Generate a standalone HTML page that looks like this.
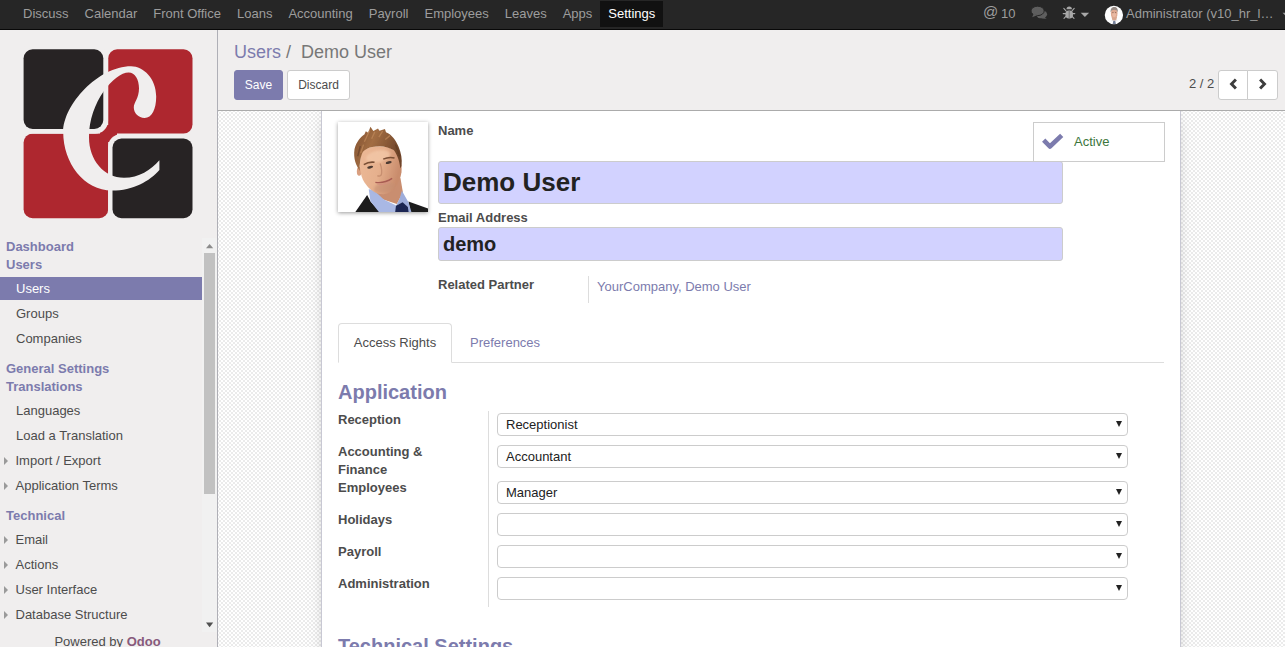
<!DOCTYPE html>
<html>
<head>
<meta charset="utf-8">
<title>Demo User - Odoo</title>
<style>
*{box-sizing:border-box;}
html,body{margin:0;padding:0;}
body{width:1285px;height:647px;overflow:hidden;position:relative;background:#f0eeee;
  font-family:"Liberation Sans",sans-serif;font-size:13px;line-height:18px;color:#4c4c4c;}
a{text-decoration:none;color:#7c7bad;}
/* ---------- navbar ---------- */
#nav{position:absolute;left:0;top:0;width:1285px;height:30px;background:#262626;border-bottom:1px solid #080808;}
#nav .m{position:absolute;top:0;height:29px;line-height:28px;color:#9d9d9d;font-size:13px;white-space:nowrap;}
#menu{position:absolute;left:15px;top:0;height:29px;display:flex;white-space:nowrap;}
#menu span{display:block;padding:0 8px;height:29px;line-height:28px;color:#9d9d9d;font-size:13px;}
#menu span.act{background:#111;color:#fff;margin-top:1px;height:26px;line-height:26px;}
/* ---------- sidebar ---------- */
#side{position:absolute;left:0;top:30px;width:218px;height:617px;background:#f0eeee;border-right:1px solid #afafb6;}
#side .sec{position:absolute;left:6px;font-weight:bold;color:#7c7bad;font-size:13px;line-height:18px;white-space:nowrap;}
#side .it{position:absolute;left:0;width:202px;height:22px;line-height:22px;padding-left:16px;color:#4c4c4c;font-size:13px;white-space:nowrap;}
#side .it.on{background:#7c7bad;color:#fff;height:23px;margin-top:-1px;line-height:24px;}
#side .tri{position:absolute;left:4px;width:0;height:0;border-left:4px solid #9a9a9a;border-top:4px solid transparent;border-bottom:4px solid transparent;}
/* ---------- control panel ---------- */
#cp{position:absolute;left:218px;top:30px;width:1067px;height:81px;background:#f0eeee;border-bottom:1px solid #ababab;}
.btn{position:absolute;height:30px;line-height:28px;font-size:12px;border-radius:3px;border:1px solid #ccc;background:#fff;color:#333;text-align:center;}
.btn.pri{background:#7c7bad;border-color:#7c7bad;color:#fff;}
/* ---------- content ---------- */
#bg{position:absolute;left:218px;top:111px;width:1067px;height:536px;
  background:repeating-conic-gradient(#ebebeb 0% 25%,#ffffff 0% 50%) 3px 1px / 4px 4px;}
#sheet{position:absolute;left:321px;top:100px;width:860px;height:700px;background:#fff;border:1px solid #c8c8d3;box-shadow:0 5px 20px -15px #000;}
.lbl{position:absolute;font-weight:bold;color:#4c4c4c;font-size:13px;line-height:18px;white-space:nowrap;}
.inp{position:absolute;background:#d2d2ff;border:1px solid #ccc;border-radius:3px;color:#222;font-weight:bold;white-space:nowrap;}
.sel{position:absolute;left:497px;width:631px;height:23px;background:#fff;border:1px solid #ccc;border-radius:4px;font-size:13px;line-height:21px;padding-left:8px;color:#222;}
.sel:after{content:"";position:absolute;right:5px;top:7px;width:0;height:0;border-top:6px solid #222;border-left:3.5px solid transparent;border-right:3.5px solid transparent;}
.h2{position:absolute;left:338px;font-size:20px;font-weight:bold;color:#7c7bad;line-height:24px;white-space:nowrap;}
</style>
</head>
<body>

<!-- content background & sheet -->
<div id="bg"></div>
<div id="sheet"></div>

<!-- form header -->
<div id="avatar" style="position:absolute;left:338px;top:122px;width:90px;height:90px;background:#fff;box-shadow:0 1px 4px rgba(0,0,0,0.4);overflow:hidden;">
<svg width="90" height="90" viewBox="14 14 621 621" style="display:block;">
  <defs>
    <filter id="bl" x="-10%" y="-10%" width="120%" height="120%"><feGaussianBlur stdDeviation="4"/></filter>
    <filter id="bl2" x="-20%" y="-20%" width="140%" height="140%"><feGaussianBlur stdDeviation="9"/></filter>
    <linearGradient id="skin" x1="0" y1="0" x2="1" y2="0.3"><stop offset="0" stop-color="#ecb997"/><stop offset="0.55" stop-color="#e6b08d"/><stop offset="1" stop-color="#c98c6c"/></linearGradient>
    <linearGradient id="hair" x1="0" y1="0" x2="1" y2="0.4"><stop offset="0" stop-color="#80502f"/><stop offset="0.45" stop-color="#a26d43"/><stop offset="1" stop-color="#6f4429"/></linearGradient>
  </defs>
  <g filter="url(#bl)">
    <!-- suit -->
    <path d="M130 640 L215 518 L240 565 L310 640Z" fill="#1c1b1d"/>
    <path d="M500 562 L640 612 L640 640 L515 640Z" fill="#1c1b1d"/>
    <!-- neck -->
    <path d="M245 440 L300 540 L420 580 L462 500 L445 400Z" fill="#c98e70"/>
    <!-- shirt -->
    <path d="M226 478 L238 560 L300 640 L425 640 L416 590 L330 548 L258 482Z" fill="#a9b8e4"/>
    <path d="M455 488 L502 572 L522 640 L482 640 L446 576 L416 590 L440 540Z" fill="#9eaddb"/>
    <!-- tie -->
    <path d="M414 592 L460 568 L496 600 L502 640 L408 640Z" fill="#1e2852"/>
    <!-- ear -->
    <ellipse cx="160" cy="355" rx="16" ry="30" fill="#d99f80"/>
    <!-- face -->
    <path d="M180 215 C160 280 160 350 185 410 C215 470 270 515 330 512 C395 505 440 440 452 360 C458 300 440 240 400 205 C330 170 240 175 180 215Z" fill="url(#skin)"/>
    <ellipse cx="290" cy="250" rx="85" ry="40" transform="rotate(-12 290 250)" fill="#f3c8a8" opacity="0.8" filter="url(#bl2)"/>
    <ellipse cx="335" cy="465" rx="75" ry="35" transform="rotate(-12 335 465)" fill="#c48f73" opacity="0.55" filter="url(#bl2)"/>
    <!-- hair -->
    <path d="M164 352 C140 312 118 270 128 200 C140 150 170 118 196 100 L206 78 L222 88 L238 46 L258 76 L290 58 L300 74 L338 62 L345 84 C385 100 415 140 432 185 C450 230 458 270 452 318 L444 334 C440 292 424 240 398 208 C350 178 300 176 250 186 C220 192 200 205 186 220 C170 250 162 300 164 352Z" fill="url(#hair)"/>
    <path d="M196 150 L232 72 M246 130 L268 82 M296 118 L322 76 M340 134 L372 108 M170 230 L190 170" stroke="#bd8759" stroke-width="9" fill="none" opacity="0.75"/>
    <path d="M150 250 L168 180 M410 170 L440 250" stroke="#5e3a24" stroke-width="10" fill="none" opacity="0.6"/>
    <!-- brows / eyes -->
    <path d="M192 308 Q228 286 266 292" stroke="#7a4f35" stroke-width="11" fill="none"/>
    <path d="M326 270 Q365 252 404 262" stroke="#7a4f35" stroke-width="11" fill="none"/>
    <ellipse cx="236" cy="326" rx="21" ry="9" transform="rotate(-12 236 326)" fill="#4d3b33"/>
    <ellipse cx="364" cy="294" rx="21" ry="9" transform="rotate(-12 364 294)" fill="#4d3b33"/>
    <!-- nose -->
    <path d="M305 300 Q322 350 312 380 Q300 392 286 384" stroke="#c78f70" stroke-width="9" fill="none"/>
    <!-- mouth -->
    <path d="M272 430 Q330 440 388 403" stroke="#a85b52" stroke-width="9" fill="none"/>
    <path d="M285 442 Q335 452 375 425" stroke="#d58f80" stroke-width="7" fill="none"/>
  </g>
</svg></div>

<div class="lbl" style="left:438px;top:122px;">Name</div>
<div class="inp" style="left:438px;top:161px;width:625px;height:43px;font-size:26px;line-height:41px;padding-left:4px;">Demo User</div>
<div class="lbl" style="left:438px;top:209px;">Email Address</div>
<div class="inp" style="left:438px;top:227px;width:625px;height:34px;font-size:20px;line-height:32px;padding-left:4px;">demo</div>
<div class="lbl" style="left:438px;top:276px;">Related Partner</div>
<div style="position:absolute;left:588px;top:276px;width:1px;height:27px;background:#ddd;"></div>
<div style="position:absolute;left:597px;top:278px;color:#7c7bad;white-space:nowrap;">YourCompany, Demo User</div>

<!-- Active stat button -->
<div style="position:absolute;left:1033px;top:122px;width:132px;height:40px;border:1px solid #ccc;background:#fff;"></div>
<svg style="position:absolute;left:1042px;top:133px;" width="22" height="18" viewBox="0 0 22 18"><path d="M1.7 7.1 L7.9 13.5 L19.7 2.3" fill="none" stroke="#7c7bad" stroke-width="4.6" stroke-linejoin="round"/></svg>
<div style="position:absolute;left:1074px;top:133px;color:#3c763d;">Active</div>

<!-- tabs -->
<div style="position:absolute;left:338px;top:362px;width:826px;height:1px;background:#ddd;"></div>
<div style="position:absolute;left:338px;top:323px;width:114px;height:40px;border:1px solid #ddd;border-bottom:1px solid #fff;border-radius:4px 4px 0 0;background:#fff;text-align:center;line-height:38px;color:#4c4c4c;">Access Rights</div>
<div style="position:absolute;left:470px;top:334px;color:#7c7bad;">Preferences</div>

<div class="h2" style="top:380px;">Application</div>
<div style="position:absolute;left:488px;top:411px;width:1px;height:196px;background:#ddd;"></div>

<div class="lbl" style="left:338px;top:411px;">Reception</div>
<div class="sel" style="top:413px;">Receptionist</div>
<div class="lbl" style="left:338px;top:443px;">Accounting &amp;<br>Finance</div>
<div class="sel" style="top:445px;">Accountant</div>
<div class="lbl" style="left:338px;top:479px;">Employees</div>
<div class="sel" style="top:481px;">Manager</div>
<div class="lbl" style="left:338px;top:511px;">Holidays</div>
<div class="sel" style="top:513px;"></div>
<div class="lbl" style="left:338px;top:543px;">Payroll</div>
<div class="sel" style="top:545px;"></div>
<div class="lbl" style="left:338px;top:575px;">Administration</div>
<div class="sel" style="top:577px;"></div>

<div class="h2" style="top:634px;">Technical Settings</div>

<!-- control panel -->
<div id="cp">
  <div style="position:absolute;left:16px;top:9px;font-size:18px;line-height:26px;white-space:nowrap;color:#777;"><span style="color:#7c7bad;">Users</span><span style="color:#777;"> /&nbsp; </span>Demo User</div>
  <div class="btn pri" style="left:16px;top:40px;width:49px;">Save</div>
  <div class="btn" style="left:69px;top:40px;width:63px;color:#4c4c4c;">Discard</div>
  <div style="position:absolute;left:971px;top:45px;line-height:18px;">2 / 2</div>
  <div class="btn" style="left:1000px;top:40px;width:30px;border-radius:3px 0 0 3px;"></div>
  <div class="btn" style="left:1029px;top:40px;width:31px;border-radius:0 3px 3px 0;"></div>
  <svg style="position:absolute;left:1011px;top:48px;" width="9" height="12" viewBox="0 0 9 12"><path d="M6.9 1.4 L2.5 6 L6.9 10.6" fill="none" stroke="#3d3d3d" stroke-width="2.9"/></svg>
  <svg style="position:absolute;left:1040px;top:48px;" width="9" height="12" viewBox="0 0 9 12"><path d="M2.1 1.4 L6.5 6 L2.1 10.6" fill="none" stroke="#3d3d3d" stroke-width="2.9"/></svg>
</div>

<!-- sidebar -->
<div id="side">
  <svg id="logo" style="position:absolute;left:20px;top:15px;" width="180" height="180" viewBox="20 45 180 180">
    <rect x="108.2" y="49.3" width="84.3" height="84.3" rx="9" fill="#ae272f"/>
    <rect x="23.6" y="133.6" width="84.6" height="84.6" rx="9" fill="#ae272f"/>
    <rect x="100" y="125" width="17" height="17" fill="#ae272f"/>
    <rect x="19" y="44.7" width="89.1" height="89" rx="13" fill="#f0eeee"/>
    <rect x="108.1" y="134" width="89" height="89" rx="13" fill="#f0eeee"/>
    <rect x="23.6" y="49.3" width="79.7" height="79.7" rx="9" fill="#272324"/>
    <rect x="112.5" y="138.5" width="80" height="79.7" rx="9" fill="#272324"/>
    <path d="M131.1 66.3 C143.6 66.3 156.2 78.8 156.2 96.5 C156.2 109.1 151.9 118.0 144.6 118.0 C138.4 118.0 133.8 113.2 133.8 107.6 C133.8 101.8 139.0 98.6 139.0 88.2 C139.0 79.8 135.2 72.4 128.6 72.4 C114.4 72.4 89.0 101.8 89.0 137.5 C89.0 160 104 177.8 124 177.8 C139 177.8 151 170 159.4 160.3 L159.4 170 C150 181 133 190.6 112 190.6 C84 190.6 63.2 163 63.2 132.0 C63.2 105 98 66.3 131.1 66.3Z" fill="#f0eeee"/>
  </svg>

  <div class="sec" style="top:208px;">Dashboard</div>
  <div class="sec" style="top:226px;">Users</div>
  <div class="it on" style="top:248px;">Users</div>
  <div class="it" style="top:273px;">Groups</div>
  <div class="it" style="top:298px;">Companies</div>
  <div class="sec" style="top:330px;">General Settings</div>
  <div class="sec" style="top:348px;">Translations</div>
  <div class="it" style="top:370px;">Languages</div>
  <div class="it" style="top:395px;">Load a Translation</div>
  <div class="it" style="top:420px;padding-left:15.5px;">Import / Export</div><div class="tri" style="top:427px;"></div>
  <div class="it" style="top:445px;padding-left:15.5px;">Application Terms</div><div class="tri" style="top:452px;"></div>
  <div class="sec" style="top:477px;">Technical</div>
  <div class="it" style="top:499px;padding-left:15.5px;">Email</div><div class="tri" style="top:506px;"></div>
  <div class="it" style="top:524px;padding-left:15.5px;">Actions</div><div class="tri" style="top:531px;"></div>
  <div class="it" style="top:549px;padding-left:15.5px;">User Interface</div><div class="tri" style="top:556px;"></div>
  <div class="it" style="top:574px;padding-left:15.5px;">Database Structure</div><div class="tri" style="top:581px;"></div>

  <!-- scrollbar -->
  <div style="position:absolute;left:202px;top:208px;width:15px;height:394px;background:#f1f1f1;"></div>
  <div style="position:absolute;left:204px;top:223px;width:11px;height:241px;background:#c1c1c1;"></div>
  <svg style="position:absolute;left:202px;top:208px;" width="15" height="394" viewBox="202 238 15 394">
    <path d="M206 248.2 L213.2 248.2 L209.6 244Z" fill="#8b8b8b"/>
    <path d="M206 622.6 L213.2 622.6 L209.6 627.2Z" fill="#505050"/>
  </svg>
  <div style="position:absolute;left:0;top:603px;width:215px;text-align:center;line-height:18px;color:#4c4c4c;">Powered by <b style="color:#875a7b;">Odoo</b></div>
</div>

<!-- navbar -->
<div id="nav">
  <div id="menu">
    <span>Discuss</span><span>Calendar</span><span>Front Office</span><span>Loans</span><span>Accounting</span><span>Payroll</span><span>Employees</span><span>Leaves</span><span>Apps</span><span class="act">Settings</span>
  </div>
  <div class="m" style="left:983px;font-size:15px;line-height:23px;">@</div><div class="m" style="left:1001px;">10</div>
  <svg style="position:absolute;left:1025px;top:0;" width="110" height="30" viewBox="1025 0 110 30">
    <!-- comments -->
    <g fill="#5e5e5e">
      <ellipse cx="1041.6" cy="14.3" rx="5.5" ry="4"/>
      <path d="M1043.5 17 L1046.8 19 L1041.5 18.2Z"/>
      <ellipse cx="1037.6" cy="10.9" rx="6.6" ry="4.7" stroke="#262626" stroke-width="1"/>
      <path d="M1033.6 13.6 L1032.2 17.2 L1037.2 15.2Z"/>
    </g>
    <!-- bug -->
    <g fill="#a8a8a8" stroke="#a8a8a8" stroke-width="1.1" stroke-linecap="round">
      <rect x="1065.4" y="10.4" width="7.6" height="8" rx="3.4" stroke="none"/>
      <path d="M1066.5 9.2 A2.6 2.7 0 0 1 1071.9 9.2Z" stroke="none"/>
      <path d="M1063.8 8.4 L1066 10.8 M1074.2 8.4 L1072 10.8 M1063.2 13.6 L1066 13.6 M1074.8 13.6 L1072 13.6 M1064 18.4 L1066.2 16.2 M1074 18.4 L1071.8 16.2" fill="none"/>
      <path d="M1069.2 11 L1069.2 18" stroke="#6a6a6a" stroke-width="0.9"/>
    </g>
    <path d="M1080.7 12.8 L1089.1 12.8 L1084.9 17.1Z" fill="#a8a8a8"/>
    <!-- user avatar -->
    <circle cx="1113.9" cy="15" r="9.15" fill="#fdfdfd"/>
    <path d="M1111.6 17 L1112.4 20.6 L1116.2 20.6 L1117 17Z" fill="#d7a78f"/>
    <ellipse cx="1114.2" cy="13.4" rx="3.3" ry="4.7" fill="#dea88f"/>
    <ellipse cx="1114.2" cy="14.6" rx="2" ry="2.6" fill="#e9b9a2"/>
    <path d="M1110.6 12.6 C1110.3 8.6 1112 7 1114.3 7 C1116.7 7 1118.2 8.6 1117.8 12.6 C1117.2 10.4 1116 9.7 1114.2 9.7 C1112.4 9.7 1111.2 10.4 1110.6 12.6Z" fill="#968a84"/>
    <path d="M1112.3 12.6 L1113.6 12.6 M1114.9 12.6 L1116.2 12.6" stroke="#7a5548" stroke-width="0.7"/>
    <path d="M1113.3 20.8 L1115.3 20.8 L1115.9 24 L1112.7 24Z" fill="#76819a"/>
    <path d="M1110.8 21 L1113.2 20.4 M1117.8 21 L1115.4 20.4" stroke="#d8dce6" stroke-width="0.6"/>
  </svg>
  <div class="m" style="left:1126px;">Administrator (v10_hr_l…</div>
  <svg style="position:absolute;left:1280px;top:10px;" width="5" height="8" viewBox="0 0 5 8"><path d="M2.6 2.8 L11 2.8 L6.8 7Z" fill="#9d9d9d"/></svg>
</div>

</body>
</html>
